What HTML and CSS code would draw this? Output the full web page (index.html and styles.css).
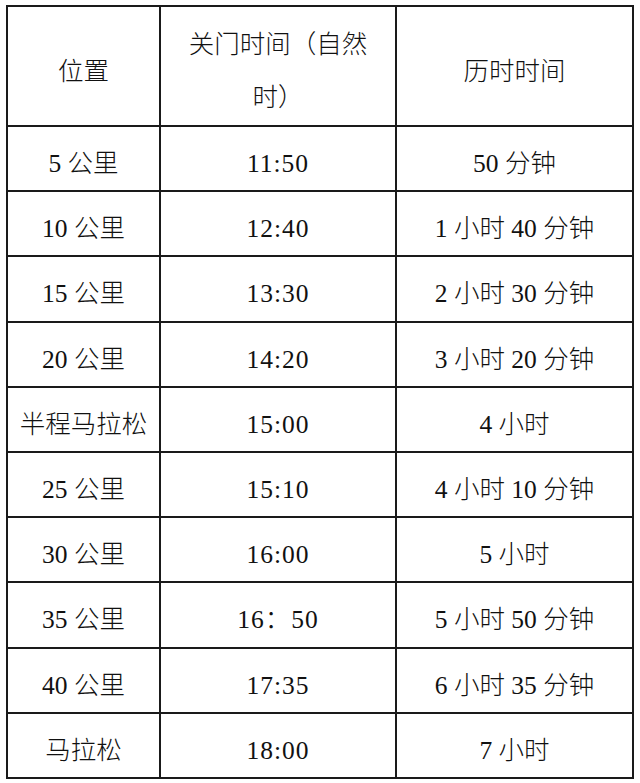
FILE: index.html
```html
<!DOCTYPE html>
<html lang="zh-CN">
<head>
<meta charset="utf-8">
<title>关门时间</title>
<link rel="stylesheet" href="styles.css">
</head>
<body>
<div class="page">
<table class="cutoff">
<colgroup><col class="c1"><col class="c2"><col class="c3"></colgroup>
<thead>
<tr class="head"><th>位置</th><th>关门时间（自然时）</th><th>历时时间</th></tr>
</thead>
<tbody>
<tr><td>5 公里</td><td class="time">11:50</td><td>50 分钟</td></tr>
<tr><td>10 公里</td><td class="time">12:40</td><td>1 小时 40 分钟</td></tr>
<tr><td>15 公里</td><td class="time">13:30</td><td>2 小时 30 分钟</td></tr>
<tr><td>20 公里</td><td class="time">14:20</td><td>3 小时 20 分钟</td></tr>
<tr><td>半程马拉松</td><td class="time">15:00</td><td>4 小时</td></tr>
<tr><td>25 公里</td><td class="time">15:10</td><td>4 小时 10 分钟</td></tr>
<tr><td>30 公里</td><td class="time">16:00</td><td>5 小时</td></tr>
<tr><td>35 公里</td><td class="time">16：50</td><td>5 小时 50 分钟</td></tr>
<tr><td>40 公里</td><td class="time">17:35</td><td>6 小时 35 分钟</td></tr>
<tr><td>马拉松</td><td class="time">18:00</td><td>7 小时</td></tr>
</tbody>
</table>
</div>
</body>
</html>
```
FILE: styles.css
```css
html, body {
  margin: 0;
  padding: 0;
  background: #ffffff;
}
.page {
  padding: 5px 0 0 6px;
}
.cutoff {
  border-collapse: collapse;
  table-layout: fixed;
  width: 626px;
  font-family: "Liberation Serif", "Noto Sans CJK SC", serif;
  font-size: 25.5px;
  font-weight: 300;
  color: #111111;
  text-spacing-trim: space-all;
}
.c1 { width: 153px; }
.c2 { width: 236px; }
.c3 { width: 237px; }
.cutoff th,
.cutoff td {
  border: 2px solid #1a1a1a;
  padding: 10px 9px 0;
  line-height: 53px;
  text-align: center;
  vertical-align: middle;
  font-weight: 300;
}
.cutoff tr {
  height: 65.2px;
}
.cutoff tr.head {
  height: 120px;
}
.time {
  letter-spacing: 1px;
}
```
